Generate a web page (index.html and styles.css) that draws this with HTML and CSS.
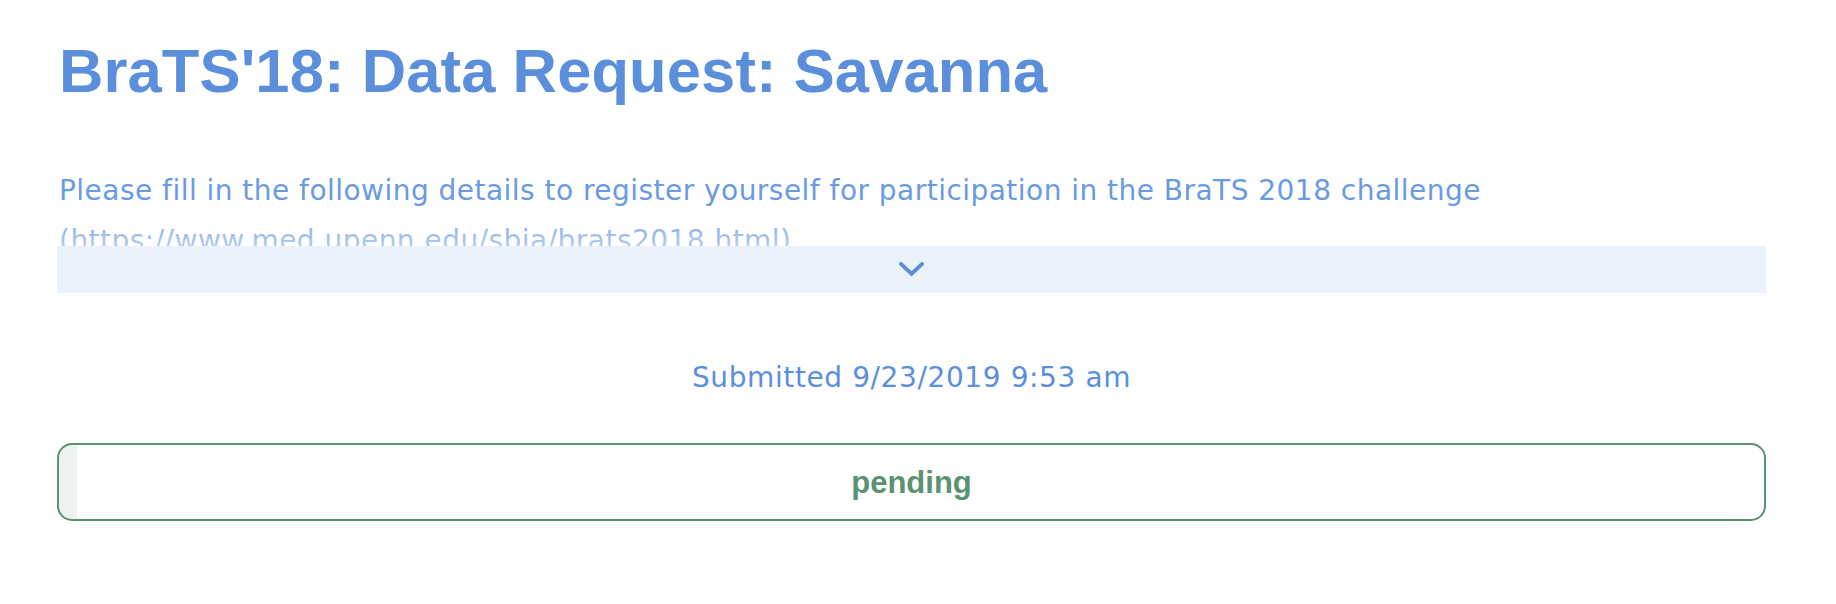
FILE: index.html
```html
<!DOCTYPE html>
<html lang="en">
<head>
<meta charset="utf-8">
<title>BraTS'18: Data Request: Savanna</title>
<link rel="stylesheet" href="styles.css">
</head>
<body>
<main class="page">
  <h1 class="title">BraTS'18: Data Request: Savanna</h1>
  <div class="description">
    <p class="description-text">Please fill in the following details to register yourself for participation in the BraTS 2018 challenge (https://www.med.upenn.edu/sbia/brats2018.html).</p>
  </div>
  <button class="expand" type="button" aria-label="Show more">
    <svg class="chevron" width="25" height="15" viewBox="0 0 25 15" aria-hidden="true">
      <path d="M2 2 L12.5 12 L23 2" fill="none" stroke="currentColor" stroke-width="3.8" stroke-linecap="square" stroke-linejoin="miter"/>
    </svg>
  </button>
  <p class="submitted">Submitted 9/23/2019 9:53 am</p>
  <div class="status">
    <span class="status-label">pending</span>
  </div>
</main>
</body>
</html>
```

FILE: styles.css
```css
html, body {
  margin: 0;
  padding: 0;
  background: #ffffff;
}

.page {
  box-sizing: border-box;
  width: 1709px;
  margin-left: 57px;
  display: flex;
  flex-direction: column;
}

.title {
  margin: 36px 0 0 0;
  font-family: "Liberation Sans", Arial, sans-serif;
  font-weight: 700;
  font-size: 61.5px;
  line-height: 70px;
  letter-spacing: 0.1px;
  color: #5b8fdc;
  padding-left: 2px;
}

.description {
  position: relative;
  margin-top: 60px;
  height: 80px;
  overflow: hidden;
}

.description::after {
  content: "";
  position: absolute;
  left: 0;
  right: 0;
  bottom: 0;
  height: 40px;
  background: linear-gradient(to bottom, rgba(255, 255, 255, 0), rgba(255, 255, 255, 0.5));
}

.description-text {
  margin: 0;
  padding-left: 2px;
  font-family: "DejaVu Sans", sans-serif;
  font-size: 28px;
  line-height: 50px;
  letter-spacing: 0.47px;
  color: #6a9ae2;
}

.expand {
  display: flex;
  align-items: center;
  justify-content: center;
  height: 47px;
  width: 100%;
  margin: 0;
  padding: 0;
  border: 0;
  background: #ebf2fa;
  color: #5b8fdc;
  cursor: pointer;
}

.chevron {
  display: block;
}

.submitted {
  margin: 60px 0 0 0;
  text-align: center;
  font-family: "DejaVu Sans", sans-serif;
  font-size: 28px;
  line-height: 50px;
  letter-spacing: 0.6px;
  color: #5b8fdc;
}

.status {
  box-sizing: border-box;
  margin-top: 40px;
  height: 78px;
  border: 2px solid #5a9272;
  border-radius: 15px;
  background: linear-gradient(to right, #ecf3ee 0, #ecf3ee 18px, #ffffff 18px);
  display: flex;
  align-items: center;
  justify-content: center;
}

.status-label {
  font-family: "Liberation Sans", Arial, sans-serif;
  font-weight: 700;
  font-size: 31px;
  line-height: 34px;
  color: #5a9272;
  margin-top: 2px;
}
```
